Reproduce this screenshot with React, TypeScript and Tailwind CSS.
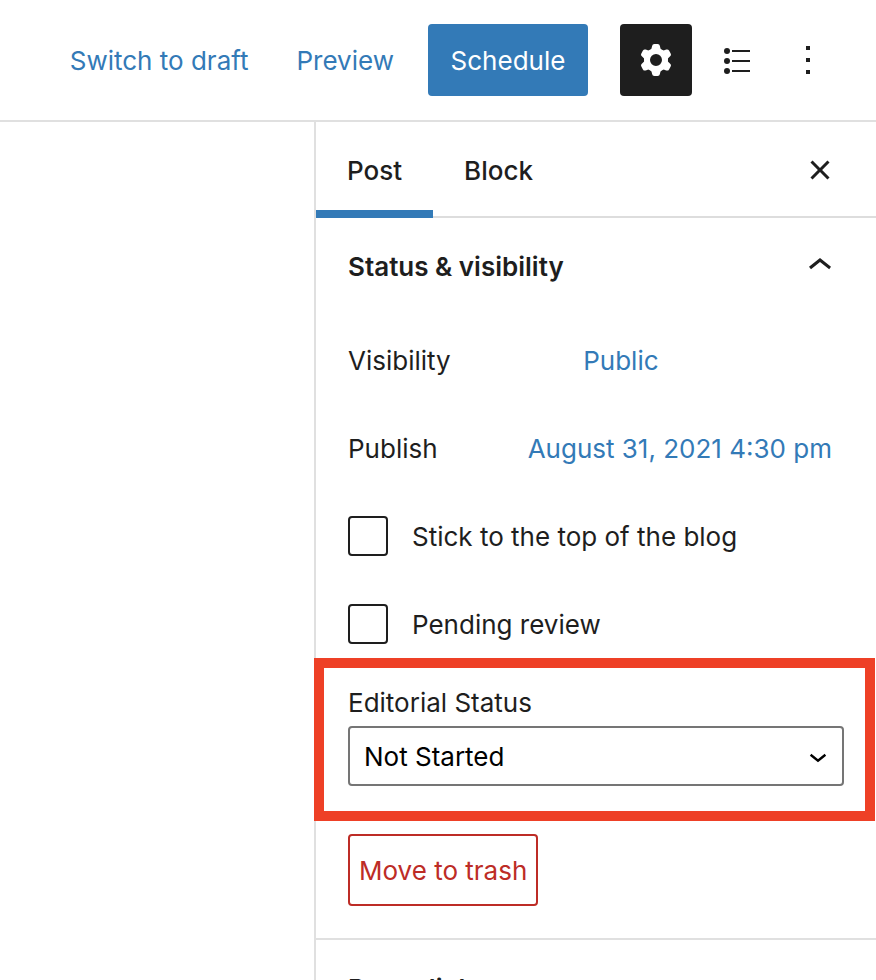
import { useState } from "react";
import type { ReactNode } from "react";

const TABS = ["Post", "Block"];

const STATUSES = ["Not Started", "In Progress", "Ready for Review", "Approved"];

const CHECKS = [
  { id: "sticky", label: "Stick to the top of the blog" },
  { id: "pending", label: "Pending review" },
];

const COG_TEETH = [0, 60, 120, 180, 240, 300];

function Icon({ children }: { children: ReactNode }) {
  return (
    <svg viewBox="0 0 24 24" fill="currentColor" className="size-12" aria-hidden="true">
      {children}
    </svg>
  );
}

function PanelTitle({ title, open, onClick }: { title: string; open: boolean; onClick: () => void }) {
  return (
    <h2>
      <button
        type="button"
        aria-expanded={open}
        onClick={onClick}
        className="flex h-24 w-full items-center justify-between px-8 text-left font-semibold"
      >
        <span className="pt-0.5">{title}</span>
        <Icon>
          {open ? (
            <path d="M6.5 12.4 12 8l5.5 4.4-.9 1.2L12 10l-4.5 3.6-1-1.2z" />
          ) : (
            <path d="M17.5 11.6 12 16l-5.5-4.4.9-1.2L12 14l4.5-3.6 1 1.2z" />
          )}
        </Icon>
      </button>
    </h2>
  );
}

function Row({ label, value }: { label: string; value: string }) {
  return (
    <div className="flex h-18 items-center">
      <span className="basis-[45%] pt-0.5">{label}</span>
      <button type="button" className="h-18 shrink-0 px-3 pt-0.5 text-[#337ab7]">
        {value}
      </button>
    </div>
  );
}

function Header() {
  return (
    <header className="flex shrink-0 items-center justify-end border-b-2 border-[#e0e0e0] px-8 py-6">
      <button type="button" className="h-18 px-6 pt-0.5 text-[#337ab7]">
        Switch to draft
      </button>
      <button type="button" className="mr-2.5 h-18 px-6 pt-0.5 text-[#337ab7]">
        Preview
      </button>
      <button type="button" className="mr-8 h-18 w-40 rounded bg-[#337ab7] pt-0.5 text-white">
        Schedule
      </button>
      <button
        type="button"
        aria-label="Settings"
        aria-pressed="true"
        className="mr-2 flex size-18 items-center justify-center rounded bg-[#1e1e1e] text-white"
      >
        <Icon>
          <circle cx="12" cy="12" r="4.5" fill="none" stroke="currentColor" strokeWidth="3" />
          {COG_TEETH.map((angle) => (
            <path
              key={angle}
              d="M11.2 4h1.6q1 0 1.15.95l.3 1.35q.15.6.75 1l-1.4 1.2h-3.2L9 7.3q.6-.4.75-1l.3-1.35Q10.2 4 11.2 4z"
              transform={`rotate(${angle} 12 12)`}
            />
          ))}
        </Icon>
      </button>
      <button type="button" aria-label="Outline" className="flex size-18 items-center justify-center">
        <Icon>
          <circle cx="7.5" cy="7.5" r="1.5" />
          <circle cx="7.5" cy="12.5" r="1.5" />
          <circle cx="7.5" cy="17.5" r="1.5" />
          <path d="M10 7h9v1h-9zM10 12h9v1h-9zM10 17h9v1h-9z" />
        </Icon>
      </button>
      <button type="button" aria-label="Options" className="flex size-18 items-center justify-center">
        <Icon>
          <path d="M13 19h-2v-2h2v2zm0-6h-2v-2h2v2zm0-6h-2V5h2v2z" />
        </Icon>
      </button>
    </header>
  );
}

export default function App() {
  const [tab, setTab] = useState("Post");
  const [statusOpen, setStatusOpen] = useState(true);
  const [permalinkOpen, setPermalinkOpen] = useState(false);

  return (
    <div className="flex h-screen flex-col overflow-hidden bg-white font-[Inter,sans-serif] text-[26px] leading-8 text-[#1e1e1e]">
      <Header />

      <div className="flex min-h-0 flex-1">
        <main className="flex-1" />

        <aside className="w-[562px] shrink-0 border-l-2 border-[#e0e0e0]">
          <div className="flex h-24 items-center pr-8 shadow-[inset_0_-2px_0_#ddd]">
            {TABS.map((name) => (
              <button
                key={name}
                type="button"
                onClick={() => setTab(name)}
                className={
                  name === tab
                    ? "h-24 px-[31px] pt-0.5 font-medium shadow-[inset_0_-8px_0_#337ab7]"
                    : "h-24 px-[31px] pt-0.5 font-medium"
                }
              >
                {name}
              </button>
            ))}
            <button type="button" aria-label="Close settings" className="ml-auto">
              <Icon>
                <path d="M12 13.06l3.712 3.713 1.061-1.06L13.061 12l3.712-3.712-1.06-1.06L12 10.938 8.288 7.227l-1.061 1.06L10.939 12l-3.712 3.712 1.06 1.061L12 13.061z" />
              </Icon>
            </button>
          </div>

          <section className="border-b-2 border-[#e0e0e0]">
            <PanelTitle title="Status & visibility" open={statusOpen} onClick={() => setStatusOpen(!statusOpen)} />

            {statusOpen && (
              <div className="pt-[10px] pb-8">
                <div className="flex flex-col gap-4 px-8">
                  <Row label="Visibility" value="Public" />
                  <Row label="Publish" value="August 31, 2021 4:30 pm" />
                </div>

                <div className="flex flex-col gap-12 px-8 pt-8 pb-[14px]">
                  {CHECKS.map((check) => (
                    <div key={check.id} className="flex h-10 items-center gap-6">
                      <input
                        id={check.id}
                        type="checkbox"
                        className="size-10 appearance-none rounded border-2 border-[#1e1e1e] bg-white checked:bg-[#337ab7]"
                      />
                      <label htmlFor={check.id} className="pt-0.5">
                        {check.label}
                      </label>
                    </div>
                  ))}
                </div>

                {/* highlighted field, its frame covers the sidebar border */}
                <div className="mr-px -ml-0.5 border-10 border-[#ee4026] pt-[19px] pr-[21px] pb-[25px] pl-6">
                  <label htmlFor="editorial-status" className="block pb-[7px]">
                    Editorial Status
                  </label>
                  <div className="relative">
                    <select
                      id="editorial-status"
                      className="block h-15 w-full appearance-none rounded border-2 border-[#757575] bg-white px-3.5 pt-0.5 text-black"
                    >
                      {STATUSES.map((status) => (
                        <option key={status}>{status}</option>
                      ))}
                    </select>
                    <svg
                      viewBox="0 0 20 10"
                      className="pointer-events-none absolute top-[27px] right-4 h-2.5 w-5 fill-none stroke-black stroke-[2.4]"
                      aria-hidden="true"
                    >
                      <path d="M2.6 1.8 10 7.8l7.4-6" />
                    </svg>
                  </div>
                </div>

                <div className="px-8 pt-[13px]">
                  <button
                    type="button"
                    className="h-18 rounded border-2 border-[#bd2c26] px-[9px] pt-0.5 text-[#bd2c26]"
                  >
                    Move to trash
                  </button>
                </div>
              </div>
            )}
          </section>

          <section className="border-b-2 border-[#e0e0e0]">
            <PanelTitle title="Permalink" open={permalinkOpen} onClick={() => setPermalinkOpen(!permalinkOpen)} />
          </section>
        </aside>
      </div>
    </div>
  );
}
